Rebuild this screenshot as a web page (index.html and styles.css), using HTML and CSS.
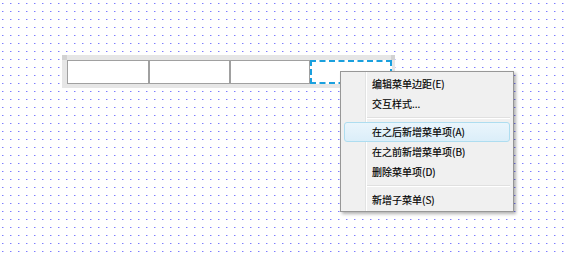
FILE: index.html
```html
<!DOCTYPE html>
<html lang="zh-CN">
<head>
<meta charset="utf-8">
<link rel="stylesheet" href="styles.css">
</head>
<body>
<div class="canvas">
  <div class="frame">
    <div class="corner corner-tl"></div>
    <div class="corner corner-tr"></div>
    <div class="menubar">
      <div class="cell cell-a"></div>
      <div class="cell cell-b"></div>
      <div class="cell cell-c"></div>
      <div class="cell cell-selected"></div>
    </div>
  </div>
  <div class="menu">
    <div class="item">编辑菜单边距(E)</div>
    <div class="item">交互样式...</div>
    <div class="sep"></div>
    <div class="item item-hover">在之后新增菜单项(A)</div>
    <div class="item">在之前新增菜单项(B)</div>
    <div class="item">删除菜单项(D)</div>
    <div class="sep"></div>
    <div class="item">新增子菜单(S)</div>
  </div>
</div>
</body>
</html>
```
FILE: styles.css
```css
html, body {
  margin: 0;
  padding: 0;
}
body {
  width: 570px;
  height: 254px;
  overflow: hidden;
  background-color: #fff;
  background-image:
    conic-gradient(from 270deg at 1px 1px, #7c7cff 90deg, transparent 0),
    conic-gradient(from 270deg at 1px 1px, #c4c4ff 90deg, transparent 0);
  background-size: 8px 8px, 8px 8px;
  background-position: 2px 3px, 3px 3px;
  font-family: "Noto Sans CJK SC", "Noto Sans", sans-serif;
}
.canvas {
  position: relative;
  width: 570px;
  height: 254px;
}
.frame {
  position: absolute;
  left: 62px;
  top: 55px;
  padding: 5px 3px 4px 5px;
  background: #e6e6e6;
}
.corner {
  position: absolute;
  top: 0;
  width: 5px;
  height: 5px;
  background: #d2d2d2;
}
.corner-tl { left: 0; }
.corner-tr { right: 0; width: 4px; }
.menubar {
  display: flex;
  background: #fff;
}
.cell {
  height: 22px;
  border: 1px solid #a0a0a0;
}
.cell-a { width: 80px; }
.cell-b { width: 79px; }
.cell-c { width: 78px; }
.cell-selected {
  width: 78px;
  height: 20px;
  border: 2px dashed #1aa0de;
}
.menu {
  position: absolute;
  left: 340px;
  top: 71px;
  width: 166px;
  padding: 2px 3px 1px;
  border: 1px solid #979797;
  background:
    linear-gradient(to right, transparent 24px, #e2e3e3 24px, #e2e3e3 25px, #ffffff 25px, #ffffff 26px, transparent 26px),
    #f0f0f0;
  box-shadow: 2px 2px 3px rgba(0, 0, 0, 0.3);
}
.item {
  height: 20px;
  line-height: 18px;
  padding-left: 27px;
  font-size: 10px;
  color: #000;
  -webkit-text-stroke: 0.15px #000;
  border: 1px solid transparent;
  box-sizing: border-box;
  border-radius: 3px;
}
.item-hover {
  border-color: #aeddf0;
  background: linear-gradient(#eaf5fc, #dbeef9);
}
.sep {
  height: 8px;
  margin-left: 23px;
  background: linear-gradient(transparent 3px, #e0e0e0 3px, #e0e0e0 4px, #ffffff 4px, #ffffff 5px, transparent 5px);
}
```
